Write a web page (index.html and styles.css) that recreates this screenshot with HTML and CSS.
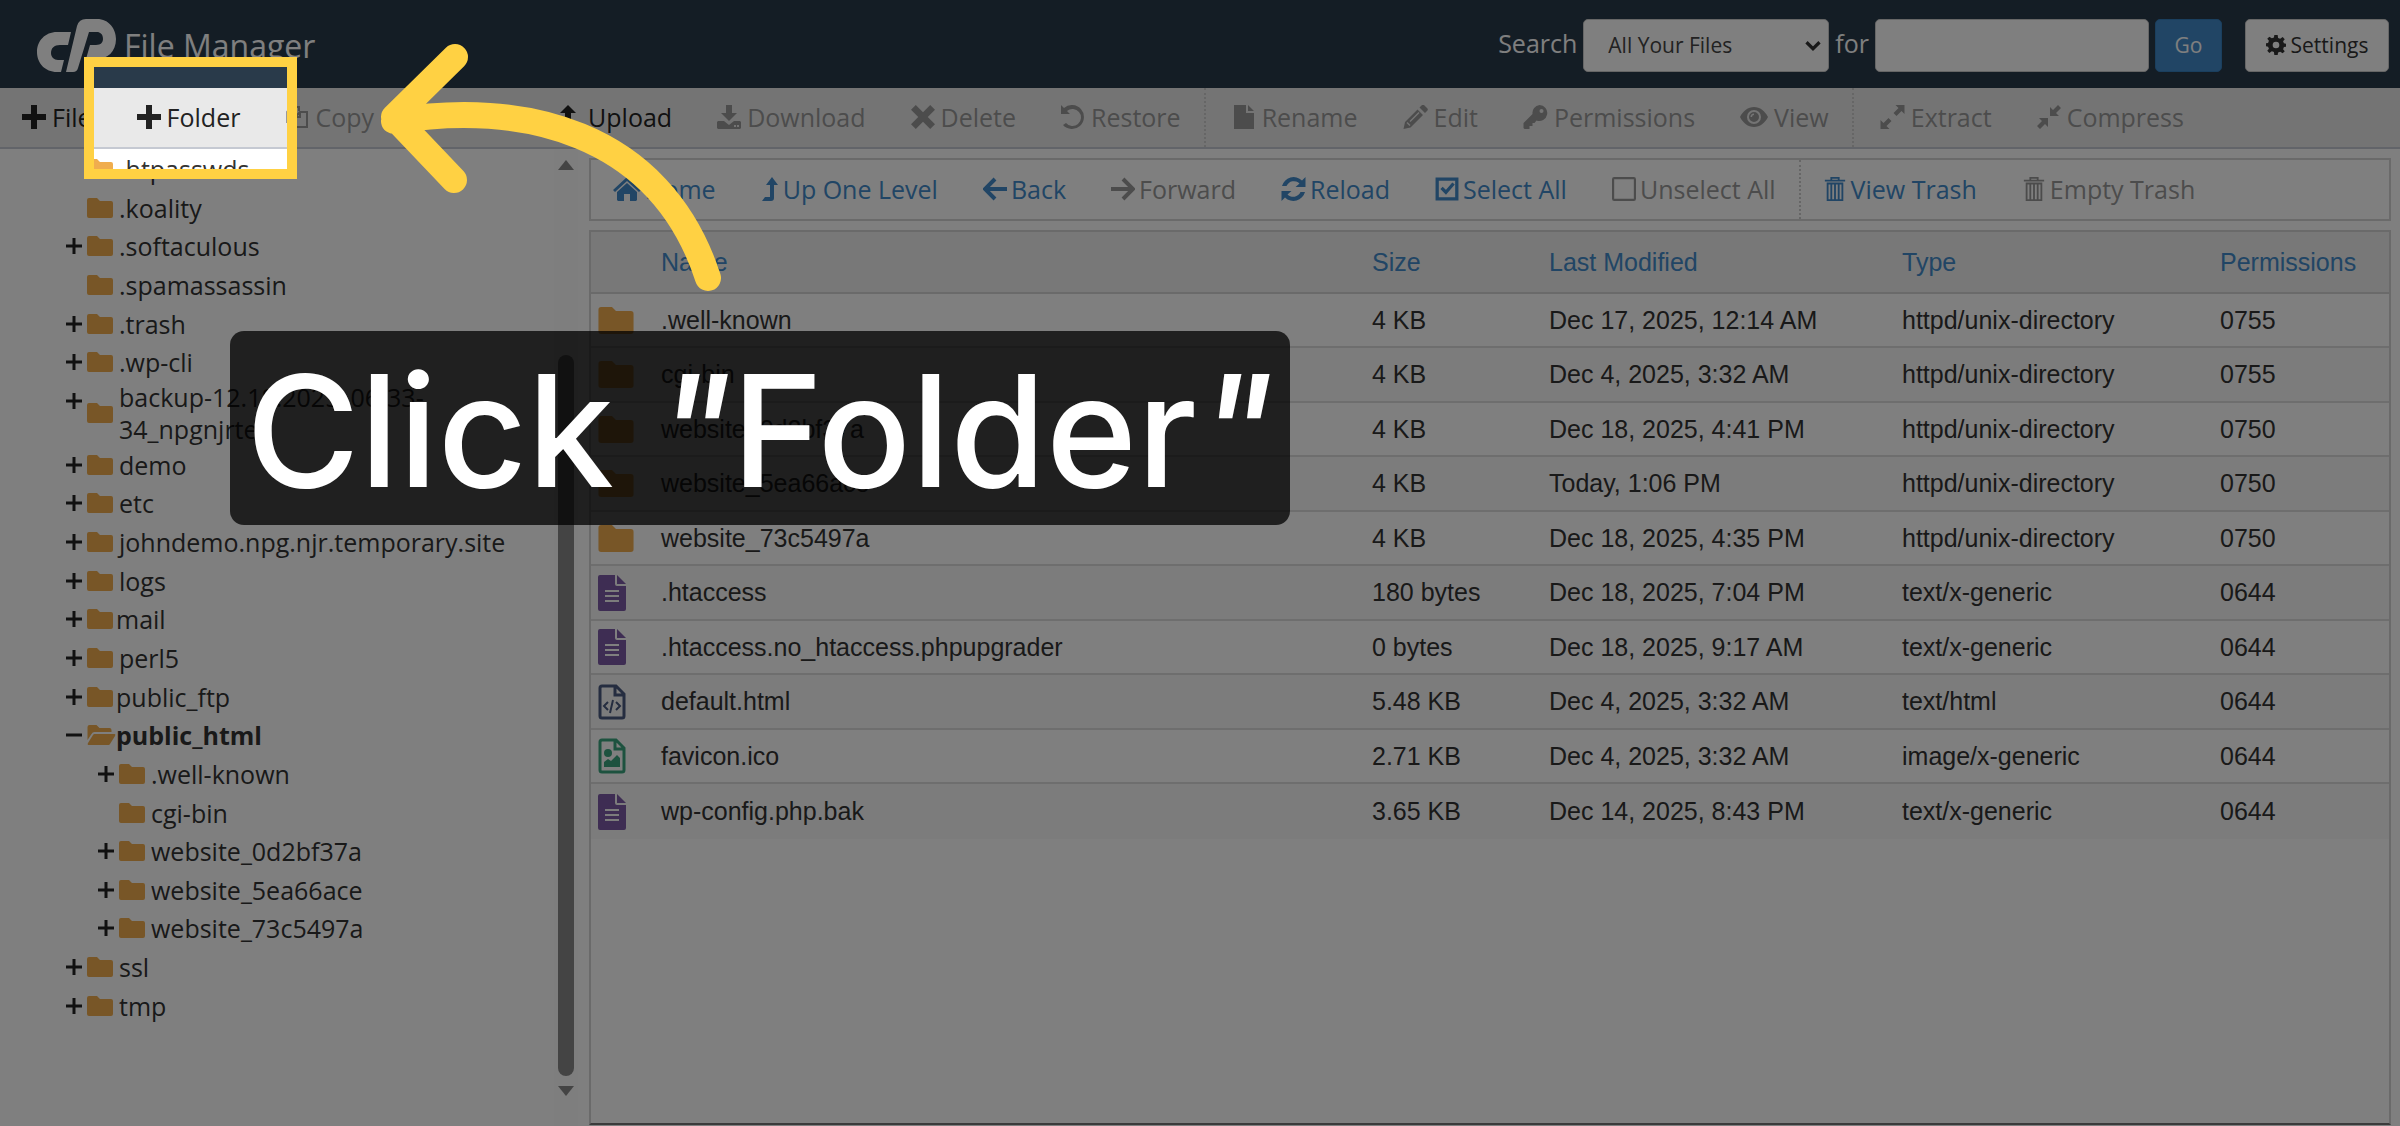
FILE: index.html
```html
<!DOCTYPE html>
<html lang="en">
<head>
<meta charset="UTF-8">
<meta name="viewport" content="width=device-width, initial-scale=1.0">
<title>File Manager</title>
<link rel="stylesheet" href="styles.css">
</head>
<body>

<svg class="sprite" aria-hidden="true">
  <symbol id="plus" viewBox="0 0 24 24"><path d="M9 0h6v9h9v6h-9v9H9v-9H0V9h9z"/></symbol>
  <symbol id="copy" viewBox="0 0 24 24"><path d="M8 17H2V7l5-5h7v4M7 2v5H2M10 12l5-5h7v15H10zM15 7v5h-5" fill="none" stroke="currentColor" stroke-width="2"/></symbol>
  <symbol id="move" viewBox="0 0 24 24"><path d="M12 0l5 5h-3.500v5.500H19V7l5 5-5 5v-3.500h-5.500V19H17l-5 5-5-5h3.500v-5.500H5V17l-5-5 5-5v3.500h5.500V5H7z"/></symbol>
  <symbol id="up" viewBox="0 0 16 24"><path d="M10 0l6 8h-4v13a3 3 0 0 1-3 3H0l3-4h5V8H4z"/></symbol>
  <symbol id="upload" viewBox="0 0 20 24"><path d="M8 0l8 8h-5v12h9v4H9a4 4 0 0 1-4-4V8H0z"/></symbol>
  <symbol id="download" viewBox="0 0 24 24"><path d="M9 0h6v8h5l-8 8-8-8h5z"/><path fill-rule="evenodd" d="M1 16h6l5 4 5-4h6l1 1v6l-1 1H1l-1-1v-6zM17 20v2h2v-2zM20 20v2h2v-2z"/></symbol>
  <symbol id="times" viewBox="0 0 20 20"><path d="M4 0l6 6 6-6 4 4-6 6 6 6-4 4-6-6-6 6-4-4 6-6-6-6z"/></symbol>
  <symbol id="undo" viewBox="0 0 24 24"><path d="M0 0l3 3a12 12 0 1 1-1 17l3-2a8.500 8.500 0 1 0 1-12l3 3H0z"/></symbol>
  <symbol id="file" viewBox="0 0 20 24"><path d="M0 0h12v8h8v16H0zM14 0l6 6h-6z"/></symbol>
  <symbol id="pencil" viewBox="0 0 24 24"><path fill-rule="evenodd" d="M0 24l1.500-7L14 4.500l5.500 5.500L7 22.500zM3 18l3 3 1-1-3-3zM6 16L15 7l1 1-9 9zM16 2.500L18 .5a2 2 0 0 1 3 0L23.500 3a2 2 0 0 1 0 3l-2 2z"/></symbol>
  <symbol id="key" viewBox="0 0 24 24"><path fill-rule="evenodd" d="M16 0a8 8 0 1 1-3 15.500L11 18H9v3H6v3H1l-1-1v-5l9-9a8 8 0 0 1 7-9zM18 4a2 2 0 1 0 0 4 2 2 0 0 0 0-4z"/></symbol>
  <symbol id="eye" viewBox="0 0 28 20"><path fill-rule="evenodd" d="M14 0c6 0 11 4 14 10-3 6-8 10-14 10S3 16 0 10C3 4 8 0 14 0zm0 3a7 7 0 1 0 0 14 7 7 0 0 0 0-14z"/><path fill-rule="evenodd" d="M14 5a5 5 0 1 1 0 10 5 5 0 0 1 0-10zm0 1.500a3.500 3.500 0 0 0-3.500 3.500h1.500a2 2 0 0 1 2-2z"/></symbol>
  <symbol id="expand" viewBox="0 0 24 24"><path d="M15 0h9v9l-3-3-5 5-3-3 5-5zM0 15l3 3 5-5 3 3-5 5 3 3H0z"/></symbol>
  <symbol id="compress" viewBox="0 0 24 24"><path d="M13 2l3 3 5-5 3 3-5 5 3 3h-9zM2 13h9v9l-3-3-5 5-3-3 5-5z"/></symbol>
  <symbol id="home" viewBox="0 0 28 24"><path d="M14 0l6 5V2h4v7l4 4-2 2L14 4 2 15l-2-2z"/><path d="M14 6l10 9v8l-1 1h-6v-7h-6v7H5l-1-1v-8z"/></symbol>
  <symbol id="left" viewBox="0 0 24 22"><path d="M12 1L2 11l10 10M3 11h21" fill="none" stroke="currentColor" stroke-width="4"/></symbol>
  <symbol id="right" viewBox="0 0 24 22"><path d="M12 1l10 10-10 10M21 11H0" fill="none" stroke="currentColor" stroke-width="4"/></symbol>
  <symbol id="reload" viewBox="0 0 24 24"><path d="M24 0v10H14l4-3.500A8 8 0 0 0 5 9H0.500A12 12 0 0 1 20.500 3.500zM0 24V14h10l-4 3.500A8 8 0 0 0 19 15h4.500A12 12 0 0 1 3.500 20.500z"/></symbol>
  <symbol id="checked" viewBox="0 0 22 22"><path d="M2 2h18v18H2zM6 10l4 4 7-8" fill="none" stroke="currentColor" stroke-width="3"/></symbol>
  <symbol id="unchecked" viewBox="0 0 22 22"><rect x="1" y="1" width="20" height="20" rx="1" fill="none" stroke="currentColor" stroke-width="2"/></symbol>
  <symbol id="trash" viewBox="0 0 22 26"><path d="M0 4h22M7 4V1h8v3M3 7h16v18H3zM7 7v18M11 7v18M15 7v18" fill="none" stroke="currentColor" stroke-width="2"/></symbol>
  <symbol id="gear" viewBox="0 0 24 24"><path fill-rule="evenodd" d="M10 0h4l.5 3.500 2.500 1 3-2L22.500 5l-2 2.500 1 2.500 2.500.500v3.500l-2.500.500-1 2.500 2 2.500-2.500 2.500-3-2-2.500 1L14 24h-4l-.5-3.500-2.500-1-3 2L1.500 19l2-2.500-1-2.500L0 13.500v-3.500l2.500-.500 1-2.500-2-2.500L4 2l3 2 2.500-1zM12 8a4 4 0 1 0 0 8 4 4 0 0 0 0-8z"/></symbol>
  <symbol id="folder" viewBox="0 0 26 20"><path d="M2 0h8l3 3h11a2 2 0 0 1 2 2v13a2 2 0 0 1-2 2H2a2 2 0 0 1-2-2V2a2 2 0 0 1 2-2z"/></symbol>
  <symbol id="folder-open" viewBox="0 0 28 20"><path d="M2 0h7l3 3h10a2 2 0 0 1 2 2v2H7a4 4 0 0 0-3 2l-4 6V2a2 2 0 0 1 2-2z"/><path d="M7 9h20c1 0 1 1 .500 2l-5 8a2 2 0 0 1-2 1H1c-1 0-1-1-.500-2l5-8a2 2 0 0 1 1.500-1z"/></symbol>
  <symbol id="doc" viewBox="0 0 28 36"><path fill-rule="evenodd" d="M2 0h15v9a2 2 0 0 0 2 2h9v23a2 2 0 0 1-2 2H2a2 2 0 0 1-2-2V2a2 2 0 0 1 2-2zM7 15v2h14v-2zM7 20v2h14v-2zM7 25v2h14v-2z"/><path d="M19 0l9 9h-9z"/></symbol>
  <symbol id="code" viewBox="0 0 28 36"><path d="M4 2h14l8 8v22a2 2 0 0 1-2 2H4a2 2 0 0 1-2-2V4a2 2 0 0 1 2-2zM17 2v9h9" fill="none" stroke="currentColor" stroke-width="3"/><path d="M10 18l-4 4 4 4M18 18l4 4-4 4M15 16l-3 13" fill="none" stroke="currentColor" stroke-width="2"/></symbol>
  <symbol id="image" viewBox="0 0 28 36"><path d="M4 2h14l8 8v22a2 2 0 0 1-2 2H4a2 2 0 0 1-2-2V4a2 2 0 0 1 2-2zM17 2v9h9" fill="none" stroke="currentColor" stroke-width="3"/><circle cx="10" cy="15" r="4"/><path d="M6 29v-5l4-3 3 2 6-6 3 3v9z"/></symbol>
  <symbol id="expander" viewBox="0 0 16 16"><path d="M8 0v16M0 8h16" stroke="currentColor" stroke-width="3"/></symbol>
  <symbol id="collapser" viewBox="0 0 16 16"><path d="M0 8h16" stroke="currentColor" stroke-width="3"/></symbol>
</svg>

<header class="header">
  <svg class="logo" viewBox="36 19 80 55" role="img" aria-label="cP">
    <path d="M71 33l-3 13h-8c-6 0-9 3-9 8 0 4 3 7 7 7h6l-3 12h-4c-12 0-20-9-20-20s8-20 20-20z"/>
    <path d="M66 73l11-46q2-7 9-7h11c12 0 19 10 19 20 0 13-9 20-19 20H86l4-14h6c5 0 7-3 7-6 0-5-3-7-6-7h-8L78 69q-1 4-5 4z"/>
  </svg>
  <h1>File Manager</h1>
  <form class="search">
    <label for="scope">Search</label>
    <span class="select-wrap">
      <select id="scope"><option>All Your Files</option></select>
      <svg class="chevron" viewBox="0 0 16 12"><path d="M2 3l6 6 6-6"/></svg>
    </span>
    <label for="query">for</label>
    <input id="query" type="text">
    <button type="submit" class="go">Go</button>
    <button type="button" class="settings"><svg><use href="#gear"/></svg>Settings</button>
  </form>
</header>

<nav class="actions">
  <button><svg><use href="#plus"/></svg>File</button>
  <button><svg><use href="#plus"/></svg>Folder</button>
  <button disabled><svg><use href="#copy"/></svg>Copy</button>
  <button disabled><svg><use href="#move"/></svg>Move</button>
  <button><svg><use href="#upload"/></svg>Upload</button>
  <button disabled><svg><use href="#download"/></svg>Download</button>
  <button disabled><svg><use href="#times"/></svg>Delete</button>
  <button disabled><svg><use href="#undo"/></svg>Restore</button>
  <button disabled class="split"><svg><use href="#file"/></svg>Rename</button>
  <button disabled><svg class="wide"><use href="#pencil"/></svg>Edit</button>
  <button disabled><svg class="wide"><use href="#key"/></svg>Permissions</button>
  <button disabled><svg class="wider"><use href="#eye"/></svg>View</button>
  <button disabled class="split"><svg class="wide"><use href="#expand"/></svg>Extract</button>
  <button disabled><svg><use href="#compress"/></svg>Compress</button>
</nav>

<div class="content">
  <aside class="sidebar">
    <ul class="tree">
      <li><button class="toggle"></button><svg><use href="#folder"/></svg><span>.htpasswds</span></li>
      <li><button class="toggle"></button><svg><use href="#folder"/></svg><span>.koality</span></li>
      <li><button class="toggle"><svg><use href="#expander"/></svg></button><svg><use href="#folder"/></svg><span>.softaculous</span></li>
      <li><button class="toggle"></button><svg><use href="#folder"/></svg><span>.spamassassin</span></li>
      <li><button class="toggle"><svg><use href="#expander"/></svg></button><svg><use href="#folder"/></svg><span>.trash</span></li>
      <li><button class="toggle"><svg><use href="#expander"/></svg></button><svg><use href="#folder"/></svg><span>.wp-cli</span></li>
      <li class="tall"><button class="toggle"><svg><use href="#expander"/></svg></button><svg><use href="#folder"/></svg><span>backup-12.18.2025_06-33-<br>34_npgnjrte</span></li>
      <li><button class="toggle"><svg><use href="#expander"/></svg></button><svg><use href="#folder"/></svg><span>demo</span></li>
      <li><button class="toggle"><svg><use href="#expander"/></svg></button><svg><use href="#folder"/></svg><span>etc</span></li>
      <li><button class="toggle"><svg><use href="#expander"/></svg></button><svg><use href="#folder"/></svg><span>johndemo.npg.njr.temporary.site</span></li>
      <li><button class="toggle"><svg><use href="#expander"/></svg></button><svg><use href="#folder"/></svg><span>logs</span></li>
      <li class="special"><button class="toggle"><svg><use href="#expander"/></svg></button><svg><use href="#folder"/></svg><span>mail</span></li>
      <li><button class="toggle"><svg><use href="#expander"/></svg></button><svg><use href="#folder"/></svg><span>perl5</span></li>
      <li class="special"><button class="toggle"><svg><use href="#expander"/></svg></button><svg><use href="#folder"/></svg><span>public_ftp</span></li>
      <li class="special open"><button class="toggle"><svg><use href="#collapser"/></svg></button><svg><use href="#folder-open"/></svg><span>public_html</span></li>
      <li class="child"><button class="toggle"><svg><use href="#expander"/></svg></button><svg><use href="#folder"/></svg><span>.well-known</span></li>
      <li class="child"><button class="toggle"></button><svg><use href="#folder"/></svg><span>cgi-bin</span></li>
      <li class="child"><button class="toggle"><svg><use href="#expander"/></svg></button><svg><use href="#folder"/></svg><span>website_0d2bf37a</span></li>
      <li class="child"><button class="toggle"><svg><use href="#expander"/></svg></button><svg><use href="#folder"/></svg><span>website_5ea66ace</span></li>
      <li class="child"><button class="toggle"><svg><use href="#expander"/></svg></button><svg><use href="#folder"/></svg><span>website_73c5497a</span></li>
      <li><button class="toggle"><svg><use href="#expander"/></svg></button><svg><use href="#folder"/></svg><span>ssl</span></li>
      <li><button class="toggle"><svg><use href="#expander"/></svg></button><svg><use href="#folder"/></svg><span>tmp</span></li>
    </ul>
    <div class="scrollbar">
      <svg viewBox="0 0 16 10"><path d="M8 0l8 10H0z"/></svg>
      <div class="thumb"></div>
      <svg viewBox="0 0 16 10"><path d="M0 0h16L8 10z"/></svg>
    </div>
  </aside>

  <main class="main">
    <nav class="browse">
      <button><svg class="wider"><use href="#home"/></svg>Home</button>
      <button><svg class="slim"><use href="#up"/></svg>Up One Level</button>
      <button><svg><use href="#left"/></svg>Back</button>
      <button disabled><svg><use href="#right"/></svg>Forward</button>
      <button><svg class="wide"><use href="#reload"/></svg>Reload</button>
      <button><svg><use href="#checked"/></svg>Select All</button>
      <button disabled><svg><use href="#unchecked"/></svg>Unselect All</button>
      <button class="split"><svg><use href="#trash"/></svg>View Trash</button>
      <button disabled><svg><use href="#trash"/></svg>Empty Trash</button>
    </nav>

    <div class="files">
      <table>
        <colgroup><col class="c-icon"><col><col class="c-size"><col class="c-date"><col class="c-type"><col class="c-perm"></colgroup>
        <thead>
          <tr><th></th><th>Name</th><th>Size</th><th>Last Modified</th><th>Type</th><th>Permissions</th></tr>
        </thead>
        <tbody>
          <tr><td><svg class="folder"><use href="#folder"/></svg></td><td>.well-known</td><td>4 KB</td><td>Dec 17, 2025, 12:14 AM</td><td>httpd/unix-directory</td><td>0755</td></tr>
          <tr><td><svg class="folder"><use href="#folder"/></svg></td><td>cgi-bin</td><td>4 KB</td><td>Dec 4, 2025, 3:32 AM</td><td>httpd/unix-directory</td><td>0755</td></tr>
          <tr><td><svg class="folder"><use href="#folder"/></svg></td><td>website_0d2bf37a</td><td>4 KB</td><td>Dec 18, 2025, 4:41 PM</td><td>httpd/unix-directory</td><td>0750</td></tr>
          <tr><td><svg class="folder"><use href="#folder"/></svg></td><td>website_5ea66ace</td><td>4 KB</td><td>Today, 1:06 PM</td><td>httpd/unix-directory</td><td>0750</td></tr>
          <tr><td><svg class="folder"><use href="#folder"/></svg></td><td>website_73c5497a</td><td>4 KB</td><td>Dec 18, 2025, 4:35 PM</td><td>httpd/unix-directory</td><td>0750</td></tr>
          <tr><td><svg class="doc"><use href="#doc"/></svg></td><td>.htaccess</td><td>180 bytes</td><td>Dec 18, 2025, 7:04 PM</td><td>text/x-generic</td><td>0644</td></tr>
          <tr><td><svg class="doc"><use href="#doc"/></svg></td><td>.htaccess.no_htaccess.phpupgrader</td><td>0 bytes</td><td>Dec 18, 2025, 9:17 AM</td><td>text/x-generic</td><td>0644</td></tr>
          <tr><td><svg class="code"><use href="#code"/></svg></td><td>default.html</td><td>5.48 KB</td><td>Dec 4, 2025, 3:32 AM</td><td>text/html</td><td>0644</td></tr>
          <tr><td><svg class="image"><use href="#image"/></svg></td><td>favicon.ico</td><td>2.71 KB</td><td>Dec 4, 2025, 3:32 AM</td><td>image/x-generic</td><td>0644</td></tr>
          <tr><td><svg class="doc"><use href="#doc"/></svg></td><td>wp-config.php.bak</td><td>3.65 KB</td><td>Dec 14, 2025, 8:43 PM</td><td>text/x-generic</td><td>0644</td></tr>
        </tbody>
      </table>
    </div>
  </main>
</div>

<!-- tour step: spotlight, caption and arrow -->
<div class="spotlight"></div>
<p class="caption">Click <i>"</i>Folder<i>"</i></p>
<svg class="arrow" viewBox="0 0 360 260">
  <path d="M79 21L18 81l60 63M18 85c126-21 266 9 314 157"/>
</svg>

</body>
</html>
```
FILE: styles.css
```css
* {
  box-sizing: border-box;
}

body {
  margin: 0;
  height: 100vh;
  display: flex;
  flex-direction: column;
  overflow: hidden;
  position: relative;
  background-color: #fff;
  color: #333;
  font-family: "Open Sans", sans-serif;
  font-size: 25px;
}

svg {
  fill: currentColor;
  flex-shrink: 0;
}

button {
  font-family: inherit;
  border: 0;
  background: none;
  padding: 0;
}

.sprite {
  position: absolute;
  width: 0;
  height: 0;
}

/* header */
.header {
  height: 88px;
  flex-shrink: 0;
  display: flex;
  align-items: center;
  padding: 2px 11px 0 36px;
  background-color: #293a4a;
  color: #fff;
}

.logo {
  width: 80px;
  height: 55px;
}

.header h1 {
  margin: 0 0 0 8px;
  font-size: 32px;
  font-weight: 400;
}

.search {
  margin-left: auto;
  display: flex;
  align-items: center;
  gap: 6px;
}

.search label {
  padding-bottom: 4px;
}

.select-wrap {
  position: relative;
}

.search select,
.search input,
.search button {
  height: 53px;
  border: 1px solid #ccc;
  border-radius: 5px;
  background-color: #fff;
  color: #444;
  font-family: inherit;
  font-size: 21px;
}

.search select {
  appearance: none;
  width: 246px;
  padding: 0 24px;
}

.search input {
  width: 274px;
}

.chevron {
  position: absolute;
  right: 7px;
  top: 20px;
  width: 18px;
  height: 13px;
  fill: none;
  stroke: #333;
  stroke-width: 3;
}

.search .go {
  width: 67px;
  border-color: #357ebd;
  background-color: #428bca;
  color: #fff;
}

.search .settings {
  display: flex;
  align-items: center;
  justify-content: center;
  gap: 5px;
  width: 144px;
  margin-left: 17px;
  color: #333;
}

.settings svg {
  width: 20px;
  height: 20px;
}

/* toolbars */
.actions,
.browse {
  display: flex;
  flex-shrink: 0;
}

.actions {
  height: 61px;
  background-color: #e9e9e9;
  border-bottom: 2px solid #c5c9d2;
}

.actions button,
.browse button {
  display: flex;
  align-items: center;
  gap: 6px;
  padding: 0 23px 2px 22px;
  font-size: 25px;
  color: #333;
}

.actions button {
  color: #222;
}

.browse button {
  gap: 4px;
  color: #428bca;
}

.actions button:disabled,
.browse button:disabled {
  color: #999;
}

.actions button.split,
.browse button.split {
  border-left: 2px dotted #ccc;
}

.actions button.split {
  padding-left: 26px;
}

.actions svg,
.browse svg {
  width: 24px;
  height: 24px;
}

.actions .wide,
.browse .wide {
  width: 25px;
}

.actions .wider,
.browse .wider {
  width: 28px;
}

.browse .slim {
  width: 18px;
}

.content {
  flex: 1;
  min-height: 0;
  display: flex;
}

/* folder tree */
.sidebar {
  width: 589px;
  display: flex;
}

.tree {
  flex: 1;
  margin: 0;
  padding: 1px 0 101px 66px;
  list-style: none;
  display: flex;
  flex-direction: column;
  justify-content: space-between;
}

.tree li {
  display: flex;
  align-items: center;
  height: 38px;
  line-height: 32px;
}

.tree li > svg {
  width: 26px;
  height: 20px;
  margin: 0 6px 0 5px;
  color: #f0ad4e;
}

.tree .child {
  margin-left: 32px;
}

.tree .special > svg {
  margin-right: 3px;
}

.tree .open {
  font-weight: 700;
}

.tree .open > svg {
  width: 29px;
  margin-right: 0;
}

.tree .tall {
  height: 63px;
}

.toggle {
  width: 16px;
  height: 16px;
  display: flex;
  color: #222;
}

.tall .toggle {
  margin-bottom: 24px;
}

.toggle svg {
  width: 16px;
  height: 16px;
}

.scrollbar {
  width: 24px;
  margin-right: 11px;
  padding: 11px 4px 30px;
  display: flex;
  flex-direction: column;
  align-items: center;
  background-color: #fcfcfc;
  color: #888;
}

.scrollbar svg {
  width: 16px;
  height: 10px;
}

.thumb {
  flex: 1;
  width: 16px;
  margin: 185px 0 10px;
  border-radius: 8px;
  background-color: #888;
}

/* file list */
.main {
  flex: 1;
  min-width: 0;
  display: flex;
  flex-direction: column;
  gap: 9px;
  padding: 9px 9px 1px 0;
}

.browse {
  height: 63px;
  border: 2px solid #d4d4d4;
}

.files {
  flex: 1;
  border: 2px solid #d4d4d4;
  border-bottom-color: #777;
}

.files table {
  width: 100%;
  table-layout: fixed;
  border-collapse: separate;
  border-spacing: 0;
  font-family: "Liberation Sans", Arial, sans-serif;
}

.c-icon { width: 60px; }
.c-size { width: 177px; }
.c-date { width: 353px; }
.c-type { width: 318px; }
.c-perm { width: 179px; }

th {
  height: 62px;
  padding: 0 10px;
  text-align: left;
  font-weight: 400;
  color: #428bca;
  background-color: #f0f0f0;
  border-bottom: 2px solid #d4d4d4;
}

td {
  height: 54px;
  padding: 0 10px;
  border-bottom: 2px solid #ddd;
}

td:first-child {
  padding: 0 7px;
}

tr:nth-child(even) td {
  height: 55px;
  background-color: #f9f9f9;
}

tr:last-child td {
  border-bottom: 0;
}

td svg {
  display: block;
  width: 28px;
  height: 36px;
}

td .folder {
  width: 36px;
  height: 27px;
  color: #f0ad4e;
}

.doc { color: #7d5ba6; }
.code { color: #4a5a80; }
.image { color: #3aa57f; }

/* tour overlay */
.spotlight,
.caption,
.arrow {
  position: absolute;
  pointer-events: none;
}

.spotlight {
  left: 84px;
  top: 57px;
  width: 213px;
  height: 122px;
  border: 10px solid #ffd143;
  box-shadow: 0 0 0 3000px rgba(0, 0, 0, 0.5);
}

.caption {
  left: 230px;
  top: 331px;
  margin: 0;
  padding: 6px 16px 0;
  border-radius: 14px;
  background-color: rgba(0, 0, 0, 0.75);
  color: #fff;
  font-family: Inter, sans-serif;
  font-size: 155px;
  font-weight: 500;
  line-height: 188px;
  white-space: nowrap;
}

.arrow {
  left: 376px;
  top: 36px;
  width: 360px;
  height: 260px;
  fill: none;
  stroke: #ffd143;
  stroke-width: 26;
  stroke-linecap: round;
  stroke-linejoin: round;
}
```
